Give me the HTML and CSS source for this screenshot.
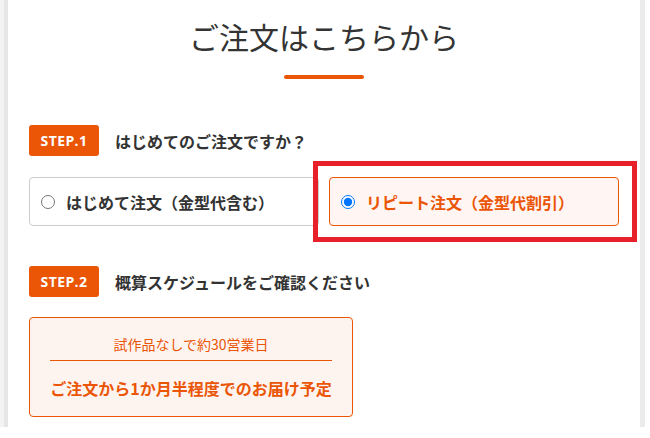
FILE: index.html
```html
<!DOCTYPE html>
<html lang="ja">
<head>
    <meta charset="UTF-8">
    <meta name="viewport" content="width=device-width, initial-scale=1.0">
    <title>ご注文はこちらから</title>
    <link rel="stylesheet" href="styles.css">
</head>
<body>
    <div class="Page">
        <div class="Order">
            <h2 class="Order-Title">ご注文はこちらから</h2>
            <div class="Order-Bar"></div>

            <div class="Step">
                <div class="Step-Badge">STEP.1</div>
                <div class="Step-Label">はじめてのご注文ですか？</div>
            </div>
            <div class="Choices">
                <label class="Choice">
                    <input type="radio" name="order-type" value="first">
                    <span>はじめて注文（金型代含む）</span>
                </label>
                <label class="Choice Choice-Active">
                    <input type="radio" name="order-type" value="repeat" checked>
                    <span>リピート注文（金型代割引）</span>
                </label>
            </div>

            <div class="Step Step-Second">
                <div class="Step-Badge">STEP.2</div>
                <div class="Step-Label">概算スケジュールをご確認ください</div>
            </div>
            <div class="Schedule">
                <div class="Schedule-Days">試作品なしで約30営業日</div>
                <div class="Schedule-Delivery">ご注文から1か月半程度でのお届け予定</div>
            </div>
        </div>
    </div>
</body>
</html>
```

FILE: styles.css
```css
body {
    margin: 0;
    background-color: #ffffff;
    font-family: "Noto Sans CJK JP", "Noto Sans", sans-serif;
    color: #333333;
}

.Page {
    width: 645px;
    box-sizing: border-box;
    border-left: 4px solid #f3f3f3;
}

.Order {
    border-left: 4px solid #e6e6e6;
    border-right: 5px solid #ebebeb;
    padding: 16px 21px 10px 21px;
}

.Order-Title {
    margin: 0;
    font-size: 30px;
    line-height: 40px;
    font-weight: 400;
    text-align: center;
    color: #333333;
}

.Order-Bar {
    width: 80px;
    height: 4px;
    margin: 19px auto 0 auto;
    border-radius: 2px;
    background-color: #ea5506;
}

.Step {
    display: flex;
    align-items: center;
    margin-top: 46px;
}

.Step-Second {
    margin-top: 40px;
}

.Step-Badge {
    width: 70px;
    height: 31px;
    display: flex;
    justify-content: center;
    align-items: center;
    background-color: #ea5506;
    color: #ffffff;
    border-radius: 3px;
    font-family: "Open Sans", "Liberation Sans", sans-serif;
    font-weight: 700;
    font-size: 14px;
    letter-spacing: 0.4px;
}

.Step-Label {
    margin-left: 16px;
    font-size: 16px;
    font-weight: 700;
    color: #333333;
}

.Choices {
    display: grid;
    grid-template-columns: 1fr 1fr;
    gap: 10px;
    margin-top: 21px;
}

.Choice {
    height: 49px;
    box-sizing: border-box;
    display: flex;
    align-items: center;
    padding-left: 11px;
    border: 1px solid #cccccc;
    border-radius: 4px;
    font-size: 16px;
    font-weight: 700;
    color: #333333;
    cursor: pointer;
}

.Choice input {
    width: 14px;
    height: 14px;
    margin: 0 11px 0 0;
}

.Choice-Active {
    position: relative;
    border-color: #ea5506;
    background-color: #fff5f3;
    color: #ea5506;
}

.Choice-Active::after {
    content: "";
    position: absolute;
    top: -17px;
    left: -17px;
    right: -19px;
    bottom: -17px;
    border: 5px solid #e8202a;
    pointer-events: none;
}

.Schedule {
    width: 324px;
    box-sizing: border-box;
    margin-top: 20px;
    padding: 16px 20px 16px 20px;
    border: 1px solid #ea5506;
    border-radius: 4px;
    background-color: #fdf4f0;
    text-align: center;
    color: #ea5506;
}

.Schedule-Days {
    font-size: 14px;
    line-height: 20px;
    padding-bottom: 6px;
    border-bottom: 1px solid #ea5506;
}

.Schedule-Delivery {
    margin-top: 15px;
    font-size: 16px;
    line-height: 24px;
    font-weight: 700;
}
```
